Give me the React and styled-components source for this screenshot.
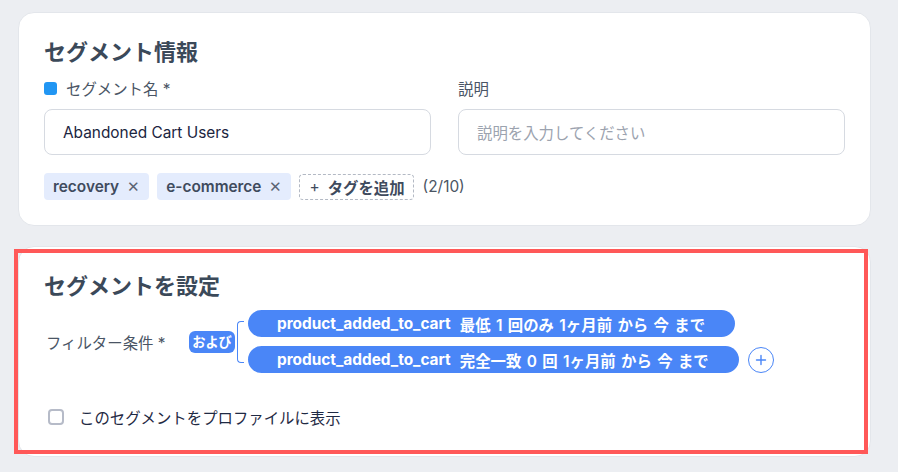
import React from "react";
import styled, { createGlobalStyle } from "styled-components";

const Global = createGlobalStyle`
  html, body { margin: 0; padding: 0; background: #eceef2; }
  body { font-family: Inter, "Noto Sans CJK JP", "Noto Sans", sans-serif; -webkit-font-smoothing: antialiased; }
  * { box-sizing: border-box; }
`;

const Page = styled.div`
  display: flex;
  flex-direction: column;
  gap: 20px;
  padding: 12px 27px 17px 18px;
  width: 898px;
`;

const Card = styled.section`
  position: relative;
  background: #fff;
  border: 1px solid #e3e6eb;
  border-radius: 16px;
  padding: ${(p) => p.$pad || "25px"};
`;

const Highlight = styled.div`
  position: absolute;
  left: -5px;
  top: 2px;
  right: 2px;
  bottom: 2px;
  border: 4px solid #ff5858;
  pointer-events: none;
`;

const Heading = styled.h2`
  margin: 0;
  font-size: 22px;
  line-height: 28px;
  font-weight: 700;
  color: #3b4959;
`;

const FieldGrid = styled.div`
  display: grid;
  grid-template-columns: 387px 387px;
  column-gap: 27px;
  margin-top: 12px;
`;

const Field = styled.div`
  display: flex;
  flex-direction: column;
  gap: 11px;
`;

const Label = styled.div`
  display: flex;
  align-items: center;
  gap: 9px;
  height: 20px;
  font-size: 15.4px;
  color: #4a5565;
`;

const Dot = styled.span`
  width: 13px;
  height: 13px;
  border-radius: 3px;
  background: #2196f3;
`;

const Input = styled.div`
  height: 46px;
  border: 1px solid #d6dae1;
  border-radius: 8px;
  display: flex;
  align-items: center;
  padding-left: 18px;
  font-size: 15.4px;
  color: ${(p) => (p.$placeholder ? "#9ca3af" : "#1b2540")};
`;

const TagRow = styled.div`
  display: flex;
  align-items: center;
  gap: 8px;
  margin-top: 18px;
`;

const Tag = styled.span`
  display: inline-flex;
  align-items: center;
  gap: 8px;
  height: 27px;
  padding: 0 9px;
  border-radius: 4px;
  background: #e4ecfd;
  color: #3f4b5e;
  font-size: 15.4px;
  font-weight: 600;
`;

const Close = styled.span`
  font-weight: 300;
  font-size: 15px;
  color: #5b6474;
`;

const AddTag = styled.span`
  display: inline-flex;
  align-items: center;
  gap: 8px;
  height: 26px;
  padding: 0 8px 0 9px;
  border: 1px dashed #b3b9c4;
  border-radius: 4px;
  color: #3f4b5e;
  font-size: 15.4px;
  font-weight: 700;
`;

const Plus = styled.span`
  font-weight: 400;
`;

const Count = styled.span`
  margin-left: 1px;
  font-size: 15.4px;
  color: #4b5563;
`;

const FilterRow = styled.div`
  display: flex;
  align-items: center;
  margin-top: 10px;
`;

const FilterLabel = styled.div`
  width: 145px;
  padding-left: 2px;
  font-size: 15.4px;
  color: #4a5565;
`;

const Badge = styled.span`
  display: inline-flex;
  align-items: center;
  justify-content: center;
  width: 46px;
  height: 22px;
  border-radius: 6px;
  background: #4a86f7;
  color: #fff;
  font-size: 13.2px;
  font-weight: 700;
`;

const Bracket = styled.span`
  width: 7px;
  height: 42px;
  margin: 0 4px 0 2px;
  border: 1.5px solid #4a86f7;
  border-right: none;
  border-radius: 4px 0 0 4px;
`;

const Conditions = styled.div`
  display: flex;
  flex-direction: column;
  gap: 9px;
`;

const CondLine = styled.div`
  display: flex;
  align-items: center;
  gap: 9px;
`;

const Pill = styled.span`
  display: inline-flex;
  align-items: center;
  gap: 9px;
  height: 27px;
  padding: 0 30px 0 29px;
  border-radius: 14px;
  background: #4a86f7;
  color: #fff;
  font-size: 15.4px;
  font-weight: 600;
  word-spacing: 1.5px;
  white-space: nowrap;
`;

const EventName = styled.span`
  font-weight: 700;
`;

const AddCond = styled.span`
  width: 26px;
  height: 26px;
  border-radius: 50%;
  border: 1px solid #4a86f7;
  display: flex;
  align-items: center;
  justify-content: center;
`;

const CheckRow = styled.label`
  display: flex;
  align-items: center;
  gap: 15px;
  margin-top: 33px;
  padding-left: 4px;
  font-size: 15.4px;
  color: #1f2a44;
`;

const Box = styled.span`
  width: 16px;
  height: 16px;
  border: 2px solid #b6bbc8;
  border-radius: 4px;
`;

export default function App() {
  return (
    <>
      <Global />
      <Page>
        <Card $pad="25px">
          <Heading>セグメント情報</Heading>
          <FieldGrid>
            <Field>
              <Label>
                <Dot />
                セグメント名 *
              </Label>
              <Input>Abandoned Cart Users</Input>
            </Field>
            <Field>
              <Label>説明</Label>
              <Input $placeholder>説明を入力してください</Input>
            </Field>
          </FieldGrid>
          <TagRow>
            <Tag>
              recovery <Close>✕</Close>
            </Tag>
            <Tag>
              e-commerce <Close>✕</Close>
            </Tag>
            <AddTag>
              <Plus>+</Plus> タグを追加
            </AddTag>
            <Count>(2/10)</Count>
          </TagRow>
        </Card>
        <Card $pad="25px 25px 28px 25px">
          <Heading>セグメントを設定</Heading>
          <FilterRow>
            <FilterLabel>フィルター条件 *</FilterLabel>
            <Badge>および</Badge>
            <Bracket />
            <Conditions>
              <CondLine>
                <Pill>
                  <EventName>product_added_to_cart</EventName>
                  <span>最低 1 回のみ 1ヶ月前 から 今 まで</span>
                </Pill>
              </CondLine>
              <CondLine>
                <Pill>
                  <EventName>product_added_to_cart</EventName>
                  <span>完全一致 0 回 1ヶ月前 から 今 まで</span>
                </Pill>
                <AddCond>
                  <svg width="12" height="12" viewBox="0 0 12 12">
                    <path d="M6 1.5v9M1.5 6h9" stroke="#4a86f7" strokeWidth="1.4" strokeLinecap="round" />
                  </svg>
                </AddCond>
              </CondLine>
            </Conditions>
          </FilterRow>
          <CheckRow>
            <Box />
            このセグメントをプロファイルに表示
          </CheckRow>
          <Highlight />
        </Card>
      </Page>
    </>
  );
}
